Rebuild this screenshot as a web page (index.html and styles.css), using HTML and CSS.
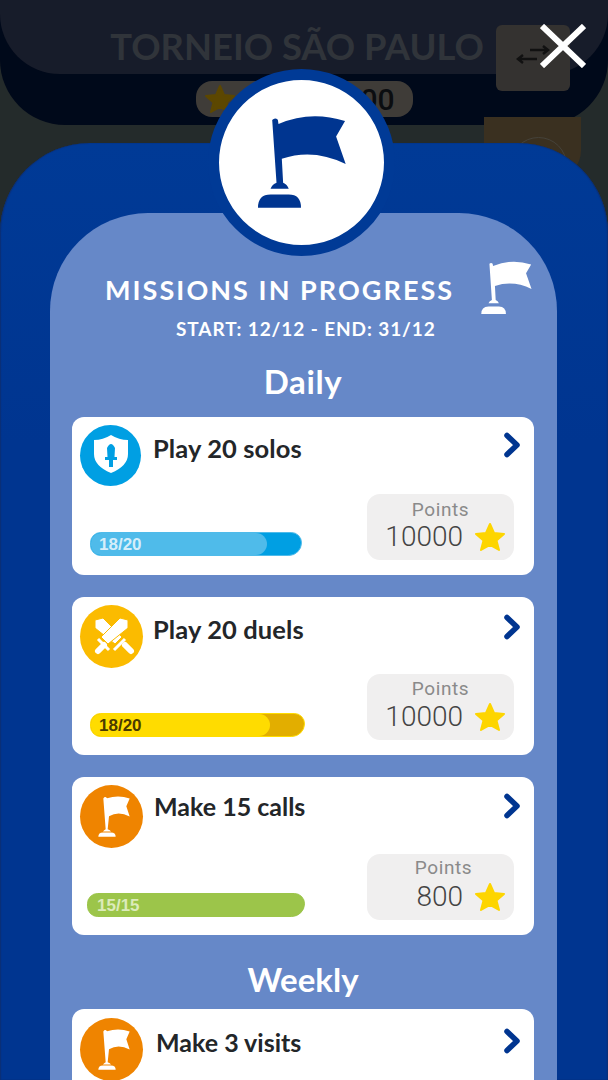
FILE: index.html
```html
<!DOCTYPE html>
<html lang="en">
<head>
<meta charset="UTF-8">
<title>Missions in progress</title>
<link rel="stylesheet" href="styles.css">
</head>
<body>

<svg class="defs" width="0" height="0">
  <symbol id="flag" viewBox="160 170 290 290">
    <path d="M215 185 Q223 176 232 184 L234 197 Q330 155 435 188 L408 235 L437 318 Q340 270 244 302 L248 375 Q260 380 265 393 L210 393 Q215 380 228 375 Z"/>
    <path d="M172 450 Q172 410 210 410 L265 410 Q302 410 302 450 Z"/>
  </symbol>
  <symbol id="flag-small" viewBox="110 72 102 128">
    <path d="M129 82 Q134 74 140 81 Q175 70 208 82 L198 105 L208 136 Q175 118 146 135 L142 174 Q150 176 152 181 L128 181 Q131 176 136 174 Z"/>
    <path d="M114 197 Q114 184 128 184 L152 184 Q166 184 166 197 Z"/>
  </symbol>
  <symbol id="star" viewBox="0 0 32 32">
    <path d="M16 3 L20 12 L30 13 L22.500 19.500 L25 29 L16 24 L7 29 L9.500 19.500 L2 13 L12 12 Z" stroke-width="2" stroke-linejoin="round"/>
  </symbol>
  <symbol id="chevron" viewBox="0 0 18 26">
    <path d="M4 3.500 L14 13 L4 22.500" fill="none" stroke-width="5.500" stroke-linecap="round" stroke-linejoin="round"/>
  </symbol>
</svg>

<div class="backdrop">
  <header class="top">
    <div class="top-inner">
      <h1>TORNEIO SÃO PAULO</h1>
    </div>
    <div class="top-pill">
      <svg class="top-star"><use href="#star"/></svg>
      <span>00</span>
    </div>
  </header>
  <div class="swap">
    <svg viewBox="0 0 74 66" width="74" height="66">
      <path d="M34 25 L52 25 M47 21 L52 25 L47 29 M41 34 L22 34 M27 30 L22 34 L27 38"/>
    </svg>
  </div>
  <div class="avatar"><div class="avatar-ring"></div></div>
</div>

<main class="modal">
  <div class="modal-panel">
    <div class="intro">
      <h2>MISSIONS IN PROGRESS</h2>
      <p>START: 12/12 - END: 31/12</p>
      <svg class="intro-flag"><use href="#flag"/></svg>
    </div>

    <h3 class="section section-daily">Daily</h3>

    <section class="card card-solo">
      <div class="card-top">
        <div class="icon icon-blue">
          <svg viewBox="0 0 61 61" width="61" height="61">
            <path class="shield" d="M31 10 Q39 15 48 15 L48 29 Q48 41 31 48 Q14 41 14 29 L14 15 Q23 15 31 10 Z"/>
            <path class="sword" d="M29 42 L29 35 L25 35 L25 32 L27.500 32 L27 23 Q31 15 35 23 L34.500 32 L37 32 L37 35 L33 35 L33 42 Z"/>
          </svg>
        </div>
        <span class="card-title">Play 20 solos</span>
        <svg class="chevron"><use href="#chevron"/></svg>
      </div>
      <div class="card-bottom">
        <div class="bar bar-blue"><div class="bar-fill" style="width: 84%"></div><span>18/20</span></div>
        <div class="points">
          <span class="points-label">Points</span>
          <div class="points-value">10000 <svg class="star"><use href="#star"/></svg></div>
        </div>
      </div>
    </section>

    <section class="card card-duel">
      <div class="card-top">
        <div class="icon icon-yellow">
          <svg viewBox="0 0 63 63" width="63" height="63">
            <path class="blade" d="M15 15 L23 13 L42 32 L35 39 L15 23 Z"/>
            <path class="blade" d="M48 15 L40 13 L21 32 L28 39 L48 23 Z"/>
            <path class="hilt" d="M18 46 L24 40 M45 40 L51 46"/>
            <path class="guard" d="M18 34 L29 45 M45 34 L34 45"/>
          </svg>
        </div>
        <span class="card-title">Play 20 duels</span>
        <svg class="chevron"><use href="#chevron"/></svg>
      </div>
      <div class="card-bottom">
        <div class="bar bar-yellow"><div class="bar-fill" style="width: 84%"></div><span>18/20</span></div>
        <div class="points">
          <span class="points-label">Points</span>
          <div class="points-value">10000 <svg class="star"><use href="#star"/></svg></div>
        </div>
      </div>
    </section>

    <section class="card card-call">
      <div class="card-top">
        <div class="icon icon-orange"><svg class="icon-flag"><use href="#flag-small"/></svg></div>
        <span class="card-title">Make 15 calls</span>
        <svg class="chevron"><use href="#chevron"/></svg>
      </div>
      <div class="card-bottom">
        <div class="bar bar-green"><div class="bar-fill" style="width: 100%"></div><span>15/15</span></div>
        <div class="points">
          <span class="points-label">Points</span>
          <div class="points-value">800 <svg class="star"><use href="#star"/></svg></div>
        </div>
      </div>
    </section>

    <h3 class="section section-weekly">Weekly</h3>

    <section class="card card-visit">
      <div class="card-top">
        <div class="icon icon-orange"><svg class="icon-flag"><use href="#flag-small"/></svg></div>
        <span class="card-title">Make 3 visits</span>
        <svg class="chevron"><use href="#chevron"/></svg>
      </div>
    </section>
  </div>
</main>

<div class="badge">
  <svg class="badge-flag"><use href="#flag"/></svg>
</div>

<button class="close" aria-label="Close">
  <svg viewBox="0 0 46 44" width="46" height="44"><path d="M2 2 L44 42 M44 2 L2 42"/></svg>
</button>

</body>
</html>
```

FILE: styles.css
```css
html, body { margin: 0; height: 100%; }
body {
  width: 608px;
  height: 1080px;
  overflow: hidden;
  position: relative;
  background: #242b2b;
  font-family: 'Lato', sans-serif;
  color: #232629;
}
.defs { position: absolute; }
h1, h2, h3, p { margin: 0; }

/* dimmed page behind the modal */
.top {
  height: 125px;
  background: #00091a;
  border-radius: 0 0 65px 65px;
  display: flex;
  flex-direction: column;
  align-items: center;
}
.top-inner {
  width: 100%;
  height: 74px;
  background: #171c2a;
  border-radius: 0 0 60px 60px;
  box-sizing: border-box;
  padding: 24px 14px 0 0;
  text-align: center;
}
.top-inner h1 {
  font-size: 36.400px;
  font-weight: 700;
  line-height: 44px;
  color: #30343a;
}
.top-pill {
  width: 217px;
  height: 36px;
  margin-top: 7px;
  background: #3f3c38;
  border-radius: 16px;
  display: flex;
  align-items: center;
  justify-content: space-between;
  padding: 0 18px 0 8px;
  box-sizing: border-box;
  font: 500 30px 'Roboto', sans-serif;
  color: #0b0d10;
}
.top-star { width: 32px; height: 32px; fill: #5c4700; stroke: #5c4700; }
.swap {
  position: absolute;
  left: 496px;
  top: 25px;
  width: 74px;
  height: 66px;
  background: #343230;
  border-radius: 6px;
}
.swap path { fill: none; stroke: #111; stroke-width: 2.500; }
.avatar {
  position: absolute;
  left: 484px;
  top: 117px;
  width: 97px;
  height: 60px;
  background: #3a3020;
  border-radius: 0 0 26px 26px;
}
.avatar-ring {
  width: 55px;
  height: 55px;
  margin: 20px 0 0 26px;
  border: 1px solid #45423a;
  border-radius: 50%;
}

.modal {
  position: absolute;
  left: 0;
  right: 0;
  top: 143px;
  height: 937px;
  padding: 70px 51px 0 50px;
  box-sizing: border-box;
  background: linear-gradient(#003a96, #003590 300px);
  border-radius: 90px 90px 0 0;
  box-shadow: inset 1px 0 1px #0c2f75, inset -1px 0 1px #0c2f75;
}
.modal-panel {
  height: 100%;
  background: #6688c8;
  border-radius: 98px 98px 0 0;
  padding: 49px 23px 0 22px;
  box-sizing: border-box;
}

.intro { position: relative; height: 101px; padding-top: 10px; box-sizing: border-box; color: #fff; }
.intro h2 {
  margin-left: 33px;
  font-size: 27px;
  font-weight: 700;
  line-height: 36px;
  letter-spacing: 2.050px;
}
.intro p {
  margin: 9px 0 0 104px;
  font-size: 19px;
  font-weight: 700;
  line-height: 24px;
  letter-spacing: 0.900px;
}
.intro-flag {
  position: absolute;
  left: 407px;
  top: -1px;
  width: 55px;
  height: 55px;
  fill: #fff;
}

.section {
  font-size: 33px;
  font-weight: 700;
  line-height: 40px;
  color: #fff;
  text-align: center;
  margin-bottom: 14px;
}
.section-daily { margin-top: -2px; margin-bottom: 16px; letter-spacing: 0.600px; }
.section-weekly { margin-top: 24px; margin-bottom: 10px; }

.card {
  height: 158px;
  background: #fff;
  border-radius: 12px;
  margin-bottom: 22px;
  padding: 8px 20px 15px 8px;
  box-sizing: border-box;
  display: flex;
  flex-direction: column;
  justify-content: space-between;
}
.card-top { display: flex; align-items: flex-start; }
.icon {
  width: 63px;
  height: 63px;
  border-radius: 50%;
  flex: none;
  display: flex;
  align-items: center;
  justify-content: center;
}
.icon-blue { width: 61px; height: 61px; background: #009fe3; }
.icon-yellow { background: #fbbb00; }
.icon-orange { background: #ef8400; }
.icon-flag { width: 34px; height: 43px; margin-left: 4px; fill: #fff; }
.shield { fill: #fff; }
.sword { fill: #009fe3; }
.blade { fill: #fff; stroke: #fbbb00; stroke-width: 1; }
.hilt { fill: none; stroke: #fff; stroke-width: 6; stroke-linecap: round; }
.guard { fill: none; stroke: #fff; stroke-width: 3; }

.card-title {
  flex: 1;
  margin-left: 12px;
  margin-top: 7px;
  font-size: 25.500px;
  font-weight: 700;
  line-height: 32px;
  letter-spacing: 0.100px;
}
.card-duel .card-title { margin-left: 10px; margin-top: 8px; }
.card-call .card-title { margin-left: 11px; margin-top: 5px; font-size: 25px; letter-spacing: 0; }
.card-visit { padding-top: 9px; }
.card-visit .card-title { margin-left: 13px; margin-top: 8px; font-size: 25px; letter-spacing: 0; }
.chevron {
  width: 18px;
  height: 26px;
  margin: 7px -7px 0 0;
  stroke: #003590;
}
.card-duel .chevron { margin-top: 9px; }
.card-call .chevron { margin-top: 8px; }
.card-visit .chevron { margin-top: 10px; }
.card-bottom { display: flex; align-items: flex-end; justify-content: space-between; }

.bar {
  position: relative;
  width: 212px;
  height: 24px;
  margin: 0 0 4px 10px;
  border: 1px solid;
  border-radius: 12px 12px 15px 12px;
  box-sizing: border-box;
  overflow: hidden;
  font: 700 17px/24px 'Liberation Sans', sans-serif;
  color: #d6eefa;
}
.bar-fill { height: 100%; border-radius: 0 12px 12px 0; }
.bar span { position: absolute; left: 8px; top: 0; }
.bar-blue { background: #009fe3; border-color: #4fbbea; }
.bar-blue .bar-fill { background: #4fbbea; }
.bar-yellow { width: 215px; margin-bottom: 3px; background: #e2ae00; border-color: #ffdc00; color: #4a3a00; }
.bar-yellow .bar-fill { background: #ffdc00; }
.bar-green { width: 218px; margin: 0 0 3px 7px; background: #9cc54a; border-color: #9cc54a; color: #dcebbb; }
.bar-green .bar-fill { background: #9cc54a; }
.bar-green span { left: 9px; }

.points {
  width: 147px;
  height: 66px;
  background: #f0efef;
  border-radius: 13px;
  box-sizing: border-box;
  padding-top: 6px;
  text-align: center;
  font-family: 'Roboto', sans-serif;
}
.points-label {
  display: block;
  font-size: 19px;
  line-height: 20px;
  font-weight: 400;
  letter-spacing: 0.600px;
  color: #8a8a8a;
}
.card-duel .points-label { margin-top: -1px; margin-bottom: 1px; }
.card-call .points-label { margin: -2px 0 2px 6px; }
.points-value {
  display: flex;
  justify-content: flex-end;
  align-items: center;
  gap: 11px;
  padding-right: 8px;
  font-size: 28px;
  font-weight: 300;
  line-height: 34px;
  color: #444;
}
.star { width: 32px; height: 32px; fill: #fdd500; stroke: #fdd500; }

.badge {
  position: absolute;
  left: 208px;
  top: 69px;
  width: 165px;
  height: 165px;
  border: 11px solid #003a96;
  border-radius: 50%;
  background: #fff;
  display: flex;
  align-items: center;
  justify-content: center;
}
.badge-flag { width: 96px; height: 96px; fill: #003590; }

.close {
  position: absolute;
  left: 540px;
  top: 24px;
  padding: 0;
  border: none;
  background: none;
  line-height: 0;
}
.close path { stroke: #fff; stroke-width: 6; fill: none; }
```
